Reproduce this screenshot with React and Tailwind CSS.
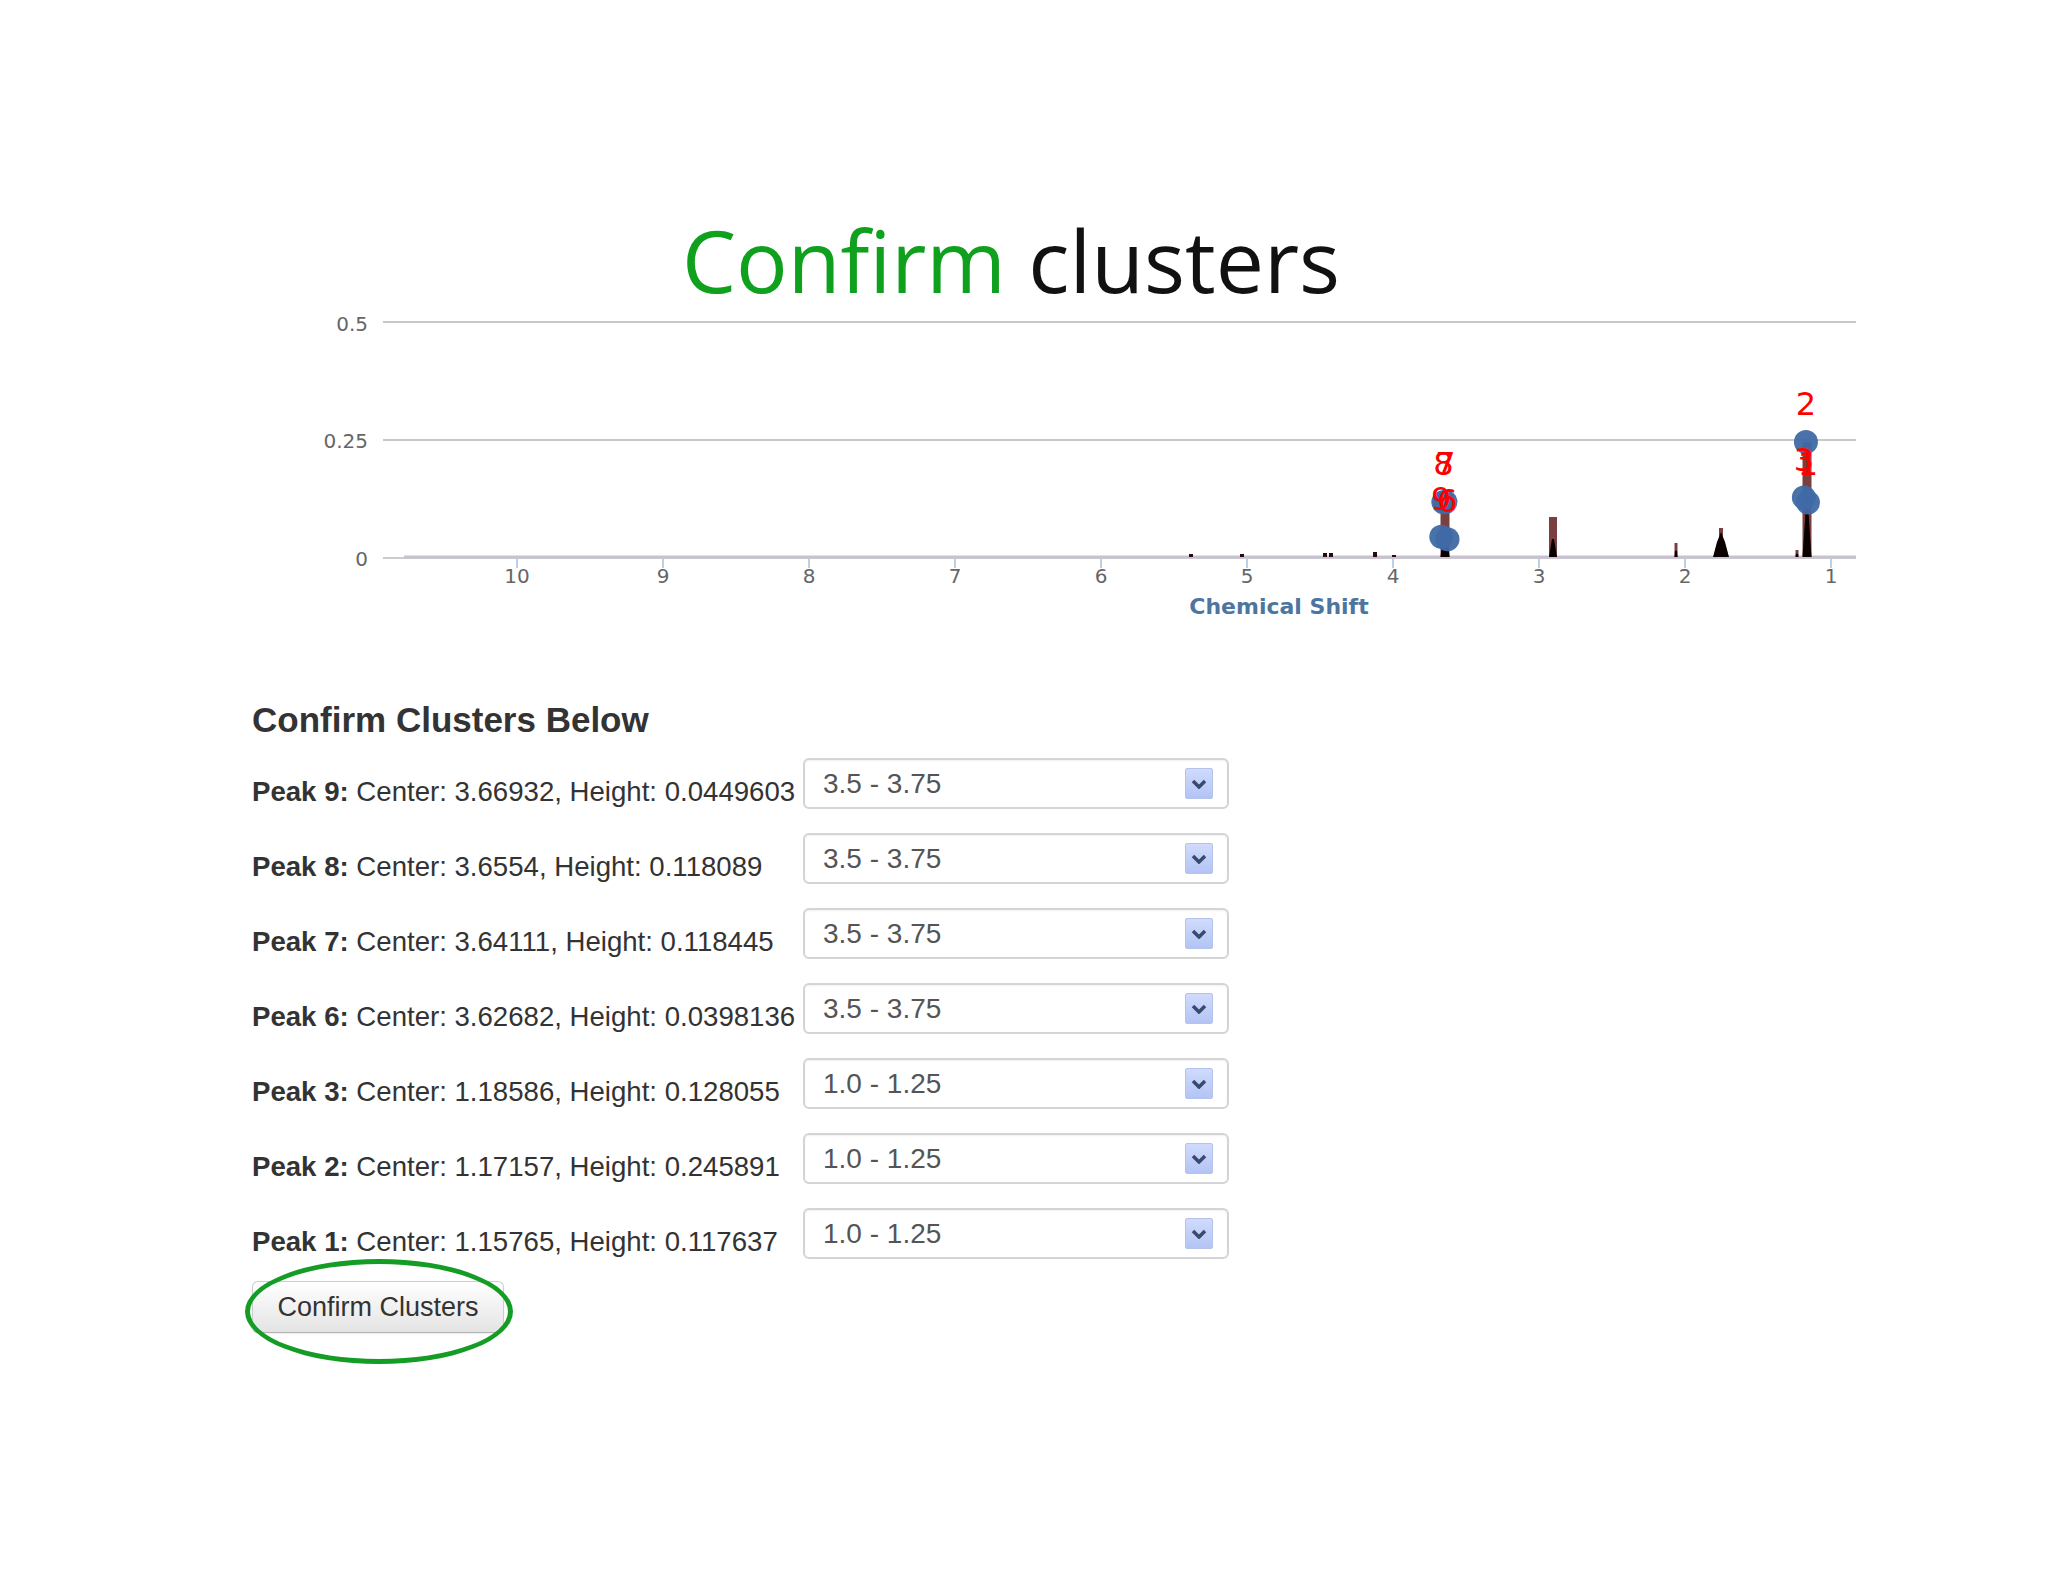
import React from "react";

const peaks = [
  { n: 9, c: "3.66932", h: "0.0449603", r: "3.5 - 3.75" },
  { n: 8, c: "3.6554", h: "0.118089", r: "3.5 - 3.75" },
  { n: 7, c: "3.64111", h: "0.118445", r: "3.5 - 3.75" },
  { n: 6, c: "3.62682", h: "0.0398136", r: "3.5 - 3.75" },
  { n: 3, c: "1.18586", h: "0.128055", r: "1.0 - 1.25" },
  { n: 2, c: "1.17157", h: "0.245891", r: "1.0 - 1.25" },
  { n: 1, c: "1.15765", h: "0.117637", r: "1.0 - 1.25" },
];

const X = (v) => 517 + (10 - v) * 146;
const Y = (v) => 558 - v * 472;

function Chart() {
  const ticks = [10, 9, 8, 7, 6, 5, 4, 3, 2, 1];
  const spikes = [
    { x: 1445, top: 493, w: 9 },
    { x: 1553, top: 517, w: 8 },
    { x: 1676, top: 543, w: 3 },
    { x: 1721, top: 528, w: 4 },
    { x: 1797, top: 550, w: 3 },
    { x: 1807, top: 442, w: 9 },
  ];
  const bumps = [
    [1191, 3], [1242, 3], [1325, 4], [1331, 4], [1375, 5], [1394, 2],
  ];
  const markers = peaks.map((p) => ({
    n: p.n,
    x: X(parseFloat(p.c)),
    y: Y(parseFloat(p.h)),
  }));
  return (
    <svg
      width="2048"
      height="340"
      viewBox="0 300 2048 340"
      className="block"
      style={{ fontFamily: '"DejaVu Sans", sans-serif' }}
    >
      <line x1="383" y1="322" x2="1856" y2="322" stroke="#c8c8c8" strokeWidth="2" />
      <line x1="383" y1="440" x2="1856" y2="440" stroke="#c8c8c8" strokeWidth="2" />
      <line x1="383" y1="558" x2="1856" y2="558" stroke="#cccccc" strokeWidth="2" />
      <line x1="404" y1="557" x2="1856" y2="557" stroke="#c8c2d0" strokeWidth="3" />
      <g fill="#666" fontSize="20" textAnchor="end">
        <text x="368" y="331">0.5</text>
        <text x="368" y="448">0.25</text>
        <text x="368" y="566">0</text>
      </g>
      {ticks.map((t) => (
        <g key={t}>
          <line x1={X(t)} y1="559" x2={X(t)} y2="568" stroke="#c0d0e0" strokeWidth="2" />
          <text x={X(t)} y="583" fill="#666" fontSize="20" textAnchor="middle">
            {t}
          </text>
        </g>
      ))}
      <text x="1279" y="614" fill="#4d759e" fontSize="22" fontWeight="bold" textAnchor="middle">
        Chemical Shift
      </text>
      {bumps.map(([x, h], i) => (
        <rect key={i} x={x - 2} y={557 - h} width="4" height={h} fill="#2a0a0a" />
      ))}
      {spikes.map((s, i) => (
        <g key={i}>
          <rect
            x={s.x - s.w / 2}
            y={s.top}
            width={s.w}
            height={557 - s.top}
            fill="#6b2a2a"
            opacity="0.9"
          />
          <polygon
            points={`${s.x - s.w / 2},557 ${s.x + s.w / 2},557 ${s.x + 1},${
              557 - (557 - s.top) * 0.45
            } ${s.x - 1},${557 - (557 - s.top) * 0.45}`}
            fill="#0a0000"
          />
        </g>
      ))}
      <polygon points="1713,557 1717,542 1721,532 1725,542 1729,557" fill="#0a0000" />
      {markers.map((m) => (
        <circle key={m.n} cx={m.x} cy={m.y} r="12" fill="#3f6aa6" opacity="0.95" />
      ))}
      <g fill="#ff0000" fontSize="32" textAnchor="middle">
        {markers.map((m) => (
          <text key={m.n} x={m.x} y={m.y - 27}>
            {m.n}
          </text>
        ))}
      </g>
    </svg>
  );
}

function Select({ value }) {
  return (
    <div className="relative flex h-[51px] w-[426px] items-center rounded-[6px] border-2 border-[#d4d4d4] bg-white pl-[18px] shadow-[inset_0_1px_2px_rgba(0,0,0,0.06)]">
      <span className="text-[28px] leading-[32px] text-[#555]">{value}</span>
      <div className="absolute right-[14px] top-[8px] flex h-[31px] w-[28px] items-center justify-center rounded-[2px] border border-[#b4c2ee] bg-gradient-to-b from-[#d0dbfc] to-[#b3c4f5]">
        <svg width="16" height="10" viewBox="0 0 16 10">
          <path d="M2 2 L8 8 L14 2" fill="none" stroke="#3a4a6e" strokeWidth="3.5" />
        </svg>
      </div>
    </div>
  );
}

export default function App() {
  return (
    <div
      className="relative h-[1582px] w-[2048px] overflow-hidden bg-white pt-[217px]"
      style={{ fontFamily: '"Liberation Sans", Arial, sans-serif' }}
    >
      <div
        className="h-[83px] pr-[26px] text-center text-[86px] leading-[86px]"
        style={{ fontFamily: '"Open Sans", sans-serif' }}
      >
        <span className="text-[#0fa01e]">Confirm</span>{" "}
        <span className="text-[#111]">clusters</span>
      </div>
      <Chart />
      <div className="pl-[252px]">
        <h4 className="mt-[60px] h-[40px] text-[35px] font-bold leading-[40px] text-[#333]">
          Confirm Clusters Below
        </h4>
        <div className="mt-[18px] flex flex-col gap-[24px]">
          {peaks.map((p) => (
            <div key={p.n} className="flex h-[51px] items-center">
              <div className="w-[551px] whitespace-nowrap pt-[16px] text-[27.6px] leading-[32px] text-[#333]">
                <span className="font-bold">Peak {p.n}:</span> Center: {p.c}, Height: {p.h}
              </div>
              <Select value={p.r} />
            </div>
          ))}
        </div>
        <div className="relative mt-[22px] inline-block">
          <button className="flex h-[52px] w-[252px] items-center justify-center rounded-[6px] border border-[#cccccc] border-b-[#b3b3b3] bg-gradient-to-b from-white to-[#e4e4e4] text-[27px] text-[#333] shadow-[0_1px_2px_rgba(0,0,0,0.08)]">
            Confirm Clusters
          </button>
          <div className="pointer-events-none absolute left-[-7px] top-[-22px] h-[105px] w-[268px] rounded-[50%] border-[5px] border-[#149c25]" />
        </div>
      </div>
    </div>
  );
}
